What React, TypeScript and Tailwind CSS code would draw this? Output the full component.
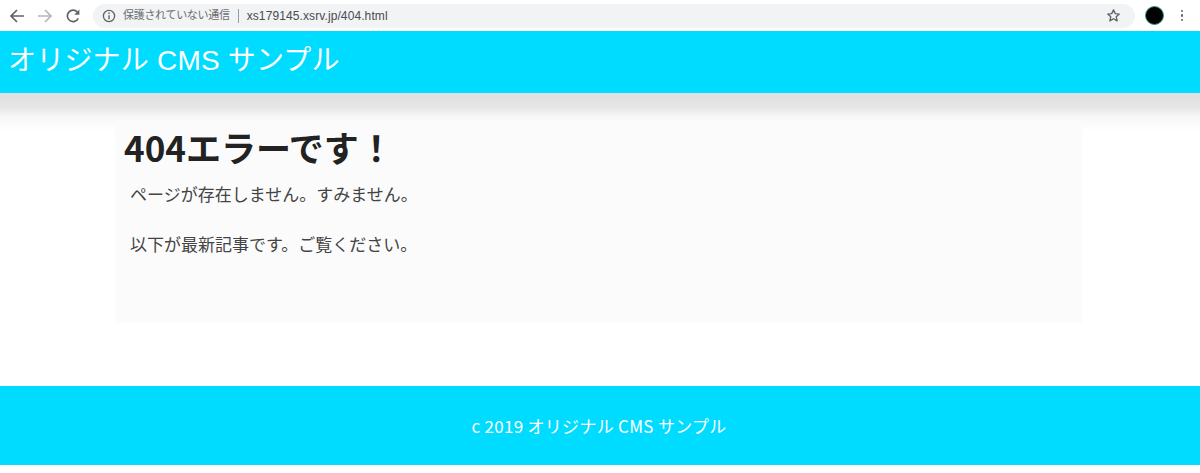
const cjk = "font-['Noto_Sans_CJK_JP','Liberation_Sans',sans-serif]";

function BrowserBar() {
  return (
    <div className="flex h-[31px] items-center bg-white pl-[9px] pr-[17px] font-['Liberation_Sans','Noto_Sans_CJK_JP',sans-serif]">
      {/* back */}
      <svg width="16" height="16" viewBox="0 0 16 16" fill="none" stroke="#5f6368" strokeWidth="1.7" className="shrink-0">
        <path d="M15 8H2M8 2L2 8l6 6" />
      </svg>
      {/* forward */}
      <svg width="16" height="16" viewBox="0 0 16 16" fill="none" stroke="#b4b6b9" strokeWidth="1.7" className="ml-[12px] shrink-0">
        <path d="M1 8h13M8 2l6 6-6 6" />
      </svg>
      {/* reload */}
      <svg width="16" height="16" viewBox="0 0 16 16" fill="none" className="ml-[12px] shrink-0">
        <path d="M13.2 10.4A5.7 5.7 0 1 1 12.4 4.2" stroke="#5f6368" strokeWidth="1.7" />
        <path d="M14.4 1.6v5.2H9.200z" fill="#5f6368" />
      </svg>
      <div className="ml-[12px] flex h-[24px] flex-1 items-center rounded-full bg-[#f1f3f4] pl-[9px] pr-[14px]">
        <svg width="14" height="14" viewBox="0 0 14 14" fill="none" className="shrink-0">
          <circle cx="7" cy="7" r="5.6" stroke="#5f6368" strokeWidth="1.3" />
          <path d="M7 6.2v4" stroke="#5f6368" strokeWidth="1.4" />
          <path d="M7 3.6v1.5" stroke="#5f6368" strokeWidth="1.4" />
        </svg>
        <span className="ml-[7px] text-[11px] tracking-[-0.3px] text-[#6a6c6f]">保護されていない通信</span>
        <span className="ml-[8px] h-[14px] w-px bg-[#9a9c9f]" />
        <span className="ml-[8px] text-[12px] tracking-[0.1px] text-[#4a4c4f]">xs179145.xsrv.jp/404.html</span>
        <svg width="15" height="15" viewBox="0 0 24 24" fill="none" stroke="#5f6368" strokeWidth="2.2" strokeLinejoin="round" className="ml-auto shrink-0">
          <path d="M12 3l2.8 6 6.4.7-4.800 4.400 1.400 6.400L12 17.200 6.200 20.500l1.400-6.400-4.800-4.400 6.400-.7z" />
        </svg>
      </div>
      <div className="ml-[10px] h-[19px] w-[19px] shrink-0 rounded-full border border-[#2f8f8c] bg-black" />
      <div className="ml-[17px] flex shrink-0 flex-col gap-[2px]">
        <span className="h-[2.500px] w-[2.500px] rounded-full bg-[#5f6368]" />
        <span className="h-[2.500px] w-[2.500px] rounded-full bg-[#5f6368]" />
        <span className="h-[2.500px] w-[2.500px] rounded-full bg-[#5f6368]" />
      </div>
    </div>
  );
}

export default function App() {
  return (
    <div className={`h-[473px] overflow-hidden bg-white ${cjk}`}>
      <BrowserBar />

      {/* Header */}
      <header className="flex h-[62px] items-center bg-[#00dcff] pb-[2px] pl-[8px]">
        <h1 className="text-[28px] font-normal font-['Liberation_Sans','Noto_Sans_CJK_JP',sans-serif] tracking-[0.2px] text-white">オリジナル CMS サンプル</h1>
      </header>

      {/* Main, the header's shadow is painted as a gradient on top of it */}
      <div className="bg-[linear-gradient(to_bottom,#dfdfdf_0px,#e6e6e6_14px,#f8f8f8_24px,#ffffff_38px)] bg-[length:100%_38px] bg-no-repeat pt-[28px]">
        <main className="ml-[115px] h-[202px] w-[967px] bg-[#fbfbfc] pl-[9px]">
          <h2 className="pt-[1px] text-[35px] leading-[50px] font-semibold text-[#222222]">404エラーです！</h2>
          <p className="ml-[6px] mt-[9px] text-[17px] leading-[26px] text-[#444444]">ページが存在しません。すみません。</p>
          <p className="ml-[6px] mt-[24px] text-[17px] leading-[26px] text-[#444444]">以下が最新記事です。ご覧ください。</p>
        </main>
      </div>

      {/* Footer */}
      <footer className="mt-[63px] flex h-[79px] items-center justify-center bg-[#00dcff] pr-[2px]">
        <p className="text-[17px] tracking-[0.3px] text-white">c 2019 オリジナル CMS サンプル</p>
      </footer>
    </div>
  );
}
